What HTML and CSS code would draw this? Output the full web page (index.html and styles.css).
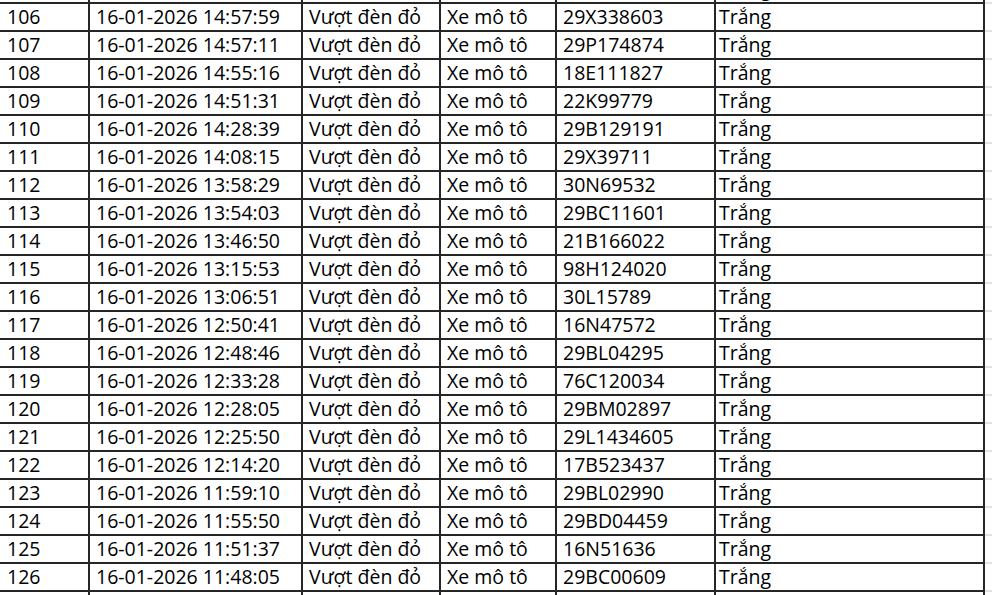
FILE: index.html
```html
<!DOCTYPE html>
<html lang="vi">
<head>
<meta charset="utf-8">
<title>Danh sách vi phạm</title>
<link rel="stylesheet" href="styles.css">
</head>
<body>
<div class="sheet">
  <div class="row"><div class="c c1">105</div><div class="c c2">16-01-2026 15:02:13</div><div class="c c3">Vượt đèn đỏ</div><div class="c c4">Xe mô tô</div><div class="c c5">29X120456</div><div class="c c6">Trắng</div><div class="c c7"></div></div>
  <div class="row"><div class="c c1">106</div><div class="c c2">16-01-2026 14:57:59</div><div class="c c3">Vượt đèn đỏ</div><div class="c c4">Xe mô tô</div><div class="c c5">29X338603</div><div class="c c6">Trắng</div><div class="c c7"></div></div>
  <div class="row"><div class="c c1">107</div><div class="c c2">16-01-2026 14:57:11</div><div class="c c3">Vượt đèn đỏ</div><div class="c c4">Xe mô tô</div><div class="c c5">29P174874</div><div class="c c6">Trắng</div><div class="c c7"></div></div>
  <div class="row"><div class="c c1">108</div><div class="c c2">16-01-2026 14:55:16</div><div class="c c3">Vượt đèn đỏ</div><div class="c c4">Xe mô tô</div><div class="c c5">18E111827</div><div class="c c6">Trắng</div><div class="c c7"></div></div>
  <div class="row"><div class="c c1">109</div><div class="c c2">16-01-2026 14:51:31</div><div class="c c3">Vượt đèn đỏ</div><div class="c c4">Xe mô tô</div><div class="c c5">22K99779</div><div class="c c6">Trắng</div><div class="c c7"></div></div>
  <div class="row"><div class="c c1">110</div><div class="c c2">16-01-2026 14:28:39</div><div class="c c3">Vượt đèn đỏ</div><div class="c c4">Xe mô tô</div><div class="c c5">29B129191</div><div class="c c6">Trắng</div><div class="c c7"></div></div>
  <div class="row"><div class="c c1">111</div><div class="c c2">16-01-2026 14:08:15</div><div class="c c3">Vượt đèn đỏ</div><div class="c c4">Xe mô tô</div><div class="c c5">29X39711</div><div class="c c6">Trắng</div><div class="c c7"></div></div>
  <div class="row"><div class="c c1">112</div><div class="c c2">16-01-2026 13:58:29</div><div class="c c3">Vượt đèn đỏ</div><div class="c c4">Xe mô tô</div><div class="c c5">30N69532</div><div class="c c6">Trắng</div><div class="c c7"></div></div>
  <div class="row"><div class="c c1">113</div><div class="c c2">16-01-2026 13:54:03</div><div class="c c3">Vượt đèn đỏ</div><div class="c c4">Xe mô tô</div><div class="c c5">29BC11601</div><div class="c c6">Trắng</div><div class="c c7"></div></div>
  <div class="row"><div class="c c1">114</div><div class="c c2">16-01-2026 13:46:50</div><div class="c c3">Vượt đèn đỏ</div><div class="c c4">Xe mô tô</div><div class="c c5">21B166022</div><div class="c c6">Trắng</div><div class="c c7"></div></div>
  <div class="row"><div class="c c1">115</div><div class="c c2">16-01-2026 13:15:53</div><div class="c c3">Vượt đèn đỏ</div><div class="c c4">Xe mô tô</div><div class="c c5">98H124020</div><div class="c c6">Trắng</div><div class="c c7"></div></div>
  <div class="row"><div class="c c1">116</div><div class="c c2">16-01-2026 13:06:51</div><div class="c c3">Vượt đèn đỏ</div><div class="c c4">Xe mô tô</div><div class="c c5">30L15789</div><div class="c c6">Trắng</div><div class="c c7"></div></div>
  <div class="row"><div class="c c1">117</div><div class="c c2">16-01-2026 12:50:41</div><div class="c c3">Vượt đèn đỏ</div><div class="c c4">Xe mô tô</div><div class="c c5">16N47572</div><div class="c c6">Trắng</div><div class="c c7"></div></div>
  <div class="row"><div class="c c1">118</div><div class="c c2">16-01-2026 12:48:46</div><div class="c c3">Vượt đèn đỏ</div><div class="c c4">Xe mô tô</div><div class="c c5">29BL04295</div><div class="c c6">Trắng</div><div class="c c7"></div></div>
  <div class="row"><div class="c c1">119</div><div class="c c2">16-01-2026 12:33:28</div><div class="c c3">Vượt đèn đỏ</div><div class="c c4">Xe mô tô</div><div class="c c5">76C120034</div><div class="c c6">Trắng</div><div class="c c7"></div></div>
  <div class="row"><div class="c c1">120</div><div class="c c2">16-01-2026 12:28:05</div><div class="c c3">Vượt đèn đỏ</div><div class="c c4">Xe mô tô</div><div class="c c5">29BM02897</div><div class="c c6">Trắng</div><div class="c c7"></div></div>
  <div class="row"><div class="c c1">121</div><div class="c c2">16-01-2026 12:25:50</div><div class="c c3">Vượt đèn đỏ</div><div class="c c4">Xe mô tô</div><div class="c c5">29L1434605</div><div class="c c6">Trắng</div><div class="c c7"></div></div>
  <div class="row"><div class="c c1">122</div><div class="c c2">16-01-2026 12:14:20</div><div class="c c3">Vượt đèn đỏ</div><div class="c c4">Xe mô tô</div><div class="c c5">17B523437</div><div class="c c6">Trắng</div><div class="c c7"></div></div>
  <div class="row"><div class="c c1">123</div><div class="c c2">16-01-2026 11:59:10</div><div class="c c3">Vượt đèn đỏ</div><div class="c c4">Xe mô tô</div><div class="c c5">29BL02990</div><div class="c c6">Trắng</div><div class="c c7"></div></div>
  <div class="row"><div class="c c1">124</div><div class="c c2">16-01-2026 11:55:50</div><div class="c c3">Vượt đèn đỏ</div><div class="c c4">Xe mô tô</div><div class="c c5">29BD04459</div><div class="c c6">Trắng</div><div class="c c7"></div></div>
  <div class="row"><div class="c c1">125</div><div class="c c2">16-01-2026 11:51:37</div><div class="c c3">Vượt đèn đỏ</div><div class="c c4">Xe mô tô</div><div class="c c5">16N51636</div><div class="c c6">Trắng</div><div class="c c7"></div></div>
  <div class="row"><div class="c c1">126</div><div class="c c2">16-01-2026 11:48:05</div><div class="c c3">Vượt đèn đỏ</div><div class="c c4">Xe mô tô</div><div class="c c5">29BC00609</div><div class="c c6">Trắng</div><div class="c c7"></div></div>
  <div class="row"><div class="c c1"></div><div class="c c2"></div><div class="c c3"></div><div class="c c4"></div><div class="c c5"></div><div class="c c6"></div><div class="c c7"></div></div>
</div>
</body>
</html>
```
FILE: styles.css
```css
html, body {
  margin: 0;
  padding: 0;
  background: #ffffff;
  overflow: hidden;
}
body {
  width: 992px;
  height: 595px;
  font-family: "Open Sans", "Noto Sans", sans-serif;
  font-size: 19.5px;
  color: #000000;
}
.sheet {
  margin-top: -24px;
  display: flex;
  flex-direction: column;
}
.row {
  display: grid;
  grid-template-columns: 90px 213px 138px 116px 159px 269px 1fr;
  height: 28px;
}
.c {
  box-sizing: border-box;
  height: 28px;
  border-right: 2px solid #262626;
  border-bottom: 2px solid #262626;
  padding: 3px 0 0 6px;
  line-height: 20px;
  white-space: nowrap;
  overflow: hidden;
}
.c1 { padding-left: 7px; }
.c6 { padding-left: 3px; }
.c7 {
  border-right: none;
  border-bottom: 2px solid #e2e2e2;
}
```
